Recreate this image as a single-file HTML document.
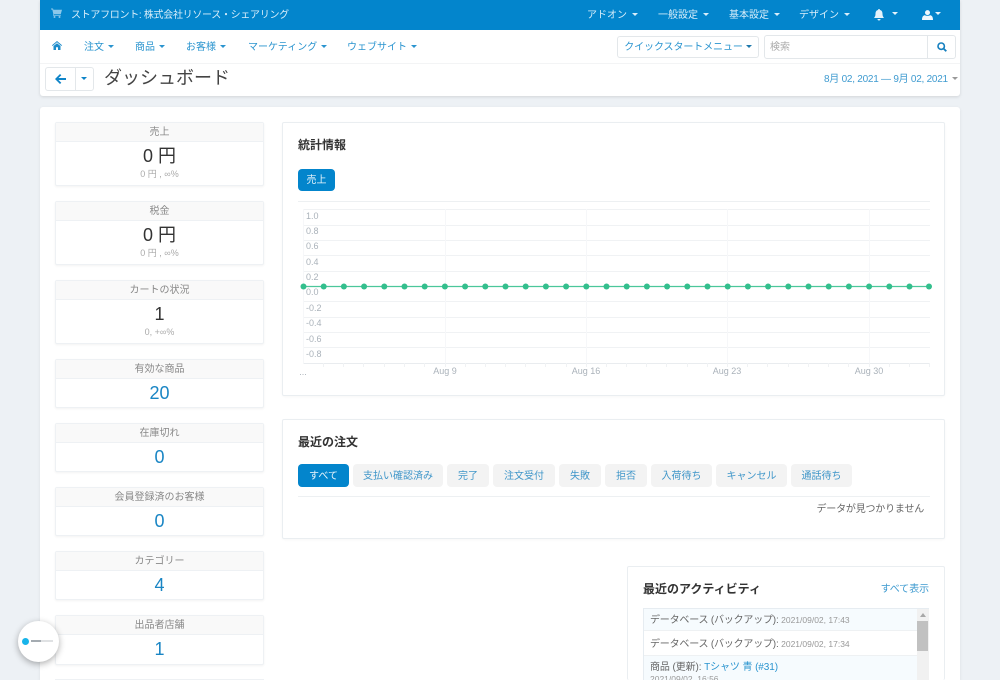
<!DOCTYPE html>
<html lang="ja"><head><meta charset="utf-8"><title>ダッシュボード</title>
<style>
*{box-sizing:border-box}
html,body{margin:0;padding:0;width:1000px;height:680px;overflow:hidden}
body{background:#edf1f5;font-family:"Liberation Sans","Noto Sans CJK JP",sans-serif;font-size:10px;color:#555}
#r{position:absolute;left:0;top:0;width:1000px;height:680px;overflow:hidden;background:#edf1f5}
.a{position:absolute;white-space:nowrap}
.c{display:inline-block;width:0;height:0;border-left:3px solid transparent;border-right:3px solid transparent;border-top:3px solid currentColor;vertical-align:2px;margin-left:4px}
.w{color:#d9eefa;font-size:10px;top:9px;line-height:14px}
.w .c{margin-left:5px}
.n{color:#2a94cf;font-size:10px;top:41px;line-height:14px}
.t{position:absolute;left:55px;width:209px;background:#fff;border:1px solid #eef1f4;border-radius:2px;box-shadow:0 1px 2px rgba(0,0,0,.05);text-align:center}
.t .h{height:19px;background:#f9f9f9;border-bottom:1px solid #eef1f4;font-size:10px;line-height:20px;color:#888}
.t .v{font-size:18px;line-height:24px;color:#333;margin-top:2px}
.t .s{font-size:9px;line-height:12px;color:#aaa}
.t .b{font-size:18px;line-height:25px;color:#1985c4;margin-top:2px}
.card{position:absolute;background:#fff;border:1px solid #eaeef1;border-radius:2px;box-shadow:0 1px 2px rgba(0,0,0,.03)}
.ti{font-size:12px;font-weight:bold;color:#333;line-height:16px}
.btn{position:absolute;top:464px;height:23px;border-radius:4px;background:#f3f3f3;color:#3f96c9;font-size:10px;line-height:26px;text-align:center;overflow:hidden}
.lb{position:absolute;left:306px;font-size:9px;color:#aab2ba;line-height:10px}
.xl{position:absolute;top:366px;font-size:9px;color:#aab2ba;line-height:10px;transform:translateX(-50%)}
</style></head><body><div id="r">

<div class="a" style="left:40px;top:0;width:920px;height:96px;background:#fff;border-radius:0 0 3px 3px;box-shadow:0 1px 3px rgba(0,0,0,.12)"></div>
<div class="a" style="left:40px;top:0;width:920px;height:30px;background:#0385cc"></div>
<div class="a" style="left:40px;top:63px;width:920px;height:1px;background:#f3f4f5"></div>

<svg class="a" style="left:51px;top:8px" width="11" height="10" viewBox="0 0 11 10"><path d="M0 .5h2l.4 1.2H11L9.8 6H3l-.2.8h7v1H2L2.300 6 1.300 1.500H0z" fill="#8cc8ea"/><circle cx="3.500" cy="9" r="1" fill="#8cc8ea"/><circle cx="8.500" cy="9" r="1" fill="#8cc8ea"/></svg>
<div class="a w" style="left:71px;letter-spacing:-.3px">ストアフロント: 株式会社リソース・シェアリング</div>
<div class="a w" style="left:587px">アドオン<i class="c"></i></div>
<div class="a w" style="left:658px">一般設定<i class="c"></i></div>
<div class="a w" style="left:729px">基本設定<i class="c"></i></div>
<div class="a w" style="left:799px">デザイン<i class="c"></i></div>
<svg class="a" style="left:873px;top:9px" width="12" height="12" viewBox="0 0 12 12"><path d="M6 0a1 1 0 0 1 1 1c2 .5 2.500 2 2.500 4 0 2 .8 3 1.500 4H1c.7-1 1.500-2 1.500-4 0-2 .5-3.500 2.500-4a1 1 0 0 1 1-1zM4.500 10h3a1.500 1.500 0 0 1-3 0z" fill="#e4f3fb"/></svg>
<div class="a" style="left:888px;top:8px;color:#e4f3fb;line-height:14px"><i class="c"></i></div>
<svg class="a" style="left:922px;top:10px" width="11" height="10" viewBox="0 0 11 10"><circle cx="5.500" cy="2.600" r="2.500" fill="#eef8fd"/><path d="M0 10c0-3.500 1.500-4.700 3-4.700 1 .8 4 .8 5 0 1.500 0 3 1.200 3 4.700z" fill="#eef8fd"/></svg>
<div class="a" style="left:932px;top:8px;color:#e4f3fb;line-height:14px"><i class="c" style="margin-left:3px"></i></div>

<svg class="a" style="left:52px;top:41px" width="10" height="9" viewBox="0 0 10 9"><path d="M5 0l5 4.300-.6.700L5 1.300.6 5 0 4.300zM1.500 5L5 2.200 8.500 5v4H6V6.300H4V9H1.500z" fill="#1d8ccb"/></svg>
<div class="a n" style="left:84px">注文<i class="c"></i></div>
<div class="a n" style="left:135px">商品<i class="c"></i></div>
<div class="a n" style="left:186px">お客様<i class="c"></i></div>
<div class="a n" style="left:248px">マーケティング<i class="c"></i></div>
<div class="a n" style="left:347px">ウェブサイト<i class="c"></i></div>

<div class="a" style="left:617px;top:36px;width:142px;height:22px;background:#fff;border:1px solid #e3e7ea;border-radius:3px;color:#2a94cf;font-size:10px;line-height:21px;text-align:center;letter-spacing:-.1px;overflow:hidden">クイックスタートメニュー<i class="c" style="color:#1d78ab;margin-left:3px"></i></div>
<div class="a" style="left:764px;top:35px;width:192px;height:24px;background:#fff;border:1px solid #e3e7ea;border-radius:3px"></div>
<div class="a" style="left:770px;top:41px;font-size:10px;line-height:13px;color:#aaa">検索</div>
<div class="a" style="left:927px;top:36px;width:1px;height:22px;background:#e3e7ea"></div>
<svg class="a" style="left:937px;top:42px" width="10" height="10" viewBox="0 0 10 10"><circle cx="4.200" cy="4.200" r="3.200" fill="none" stroke="#1680bf" stroke-width="1.600"/><path d="M6.600 6.600L9.300 9.300" stroke="#1680bf" stroke-width="1.800"/></svg>

<div class="a" style="left:45px;top:67px;width:49px;height:24px;background:#fff;border:1px solid #e3e7ea;border-radius:3px"></div>
<div class="a" style="left:75px;top:67px;width:1px;height:24px;background:#e3e7ea"></div>
<svg class="a" style="left:55px;top:74px" width="11" height="10" viewBox="0 0 11 10"><path d="M5 0l1.300 1.300L3.500 4H11v2H3.500l2.800 2.700L5 10 0 5z" fill="#0e84c8"/></svg>
<div class="a" style="left:77px;top:73px;color:#0e84c8;line-height:14px"><i class="c" style="margin-left:4px"></i></div>
<div class="a" style="left:104px;top:66px;font-size:18px;line-height:24px;color:#444">ダッシュボード</div>
<div class="a" style="left:824px;top:73px;font-size:10px;line-height:14px;color:#3f9bd0;letter-spacing:-.25px">8月 02, 2021 — 9月 02, 2021<i class="c" style="color:#999;margin-left:4px"></i></div>

<div class="a" style="left:40px;top:107px;width:920px;height:573px;background:#fff;border-radius:3px 3px 0 0;box-shadow:0 1px 3px rgba(0,0,0,.08)"></div>

<div class="t" style="top:122px;height:64px"><div class="h">売上</div><div class="v">0 円</div><div class="s">0 円 , ∞%</div></div>
<div class="t" style="top:201px;height:64px"><div class="h">税金</div><div class="v">0 円</div><div class="s">0 円 , ∞%</div></div>
<div class="t" style="top:280px;height:64px"><div class="h">カートの状況</div><div class="v">1</div><div class="s">0, +∞%</div></div>
<div class="t" style="top:359px;height:49px"><div class="h">有効な商品</div><div class="b">20</div></div>
<div class="t" style="top:423px;height:49px"><div class="h">在庫切れ</div><div class="b">0</div></div>
<div class="t" style="top:487px;height:49px"><div class="h">会員登録済のお客様</div><div class="b">0</div></div>
<div class="t" style="top:551px;height:49px"><div class="h">カテゴリー</div><div class="b">4</div></div>
<div class="t" style="top:615px;height:50px"><div class="h">出品者店舗</div><div class="b">1</div></div>
<div class="a" style="left:55px;top:679px;width:209px;height:1px;background:#eef1f4"></div>

<div class="card" style="left:282px;top:122px;width:663px;height:274px"></div>
<div class="a ti" style="left:298px;top:137px">統計情報</div>
<div class="a" style="left:298px;top:169px;width:37px;height:22px;background:#0385cc;border-radius:4px;color:#e8f5fc;font-size:10px;line-height:23px;text-align:center">売上</div>
<div class="a" style="left:298px;top:201px;width:632px;height:1px;background:#edf0f2"></div>

<svg class="a" style="left:295px;top:205px" width="640" height="165" viewBox="295 205 640 165">
<g stroke="#f0f2f4" stroke-width="1" fill="none">
<path d="M303.500 209.500H930M303.500 225.500H930M303.500 240.500H930M303.500 255.500H930M303.500 271.500H930M303.500 301.500H930M303.500 317.500H930M303.500 332.500H930M303.500 347.500H930"/>
<path d="M303.500 209V363M445.500 209V363M586.500 209V363M727.500 209V363M869.500 209V363" stroke="#f6f7f9"/>
<path d="M303.500 363.500H930" stroke="#e9ecef"/>
<path d="M323.500 363v4M343.500 363v4M363.500 363v4M384.500 363v4M404.500 363v4M424.500 363v4M445.500 363v4M465.500 363v4M485.500 363v4M505.500 363v4M525.500 363v4M545.500 363v4M566.500 363v4M586.500 363v4M606.500 363v4M626.500 363v4M646.500 363v4M666.500 363v4M687.500 363v4M707.500 363v4M727.500 363v4M747.500 363v4M767.500 363v4M788.500 363v4M808.500 363v4M828.500 363v4M848.500 363v4M869.500 363v4M889.500 363v4M909.500 363v4M929.500 363v4"/>
</g>
<path d="M303 286.500H930" stroke="#4cc79b" stroke-width="1.200"/>
<g fill="#33bf8d">
<circle cx="303.500" cy="286.500" r="3"/><circle cx="323.700" cy="286.500" r="3"/><circle cx="343.900" cy="286.500" r="3"/><circle cx="364.100" cy="286.500" r="3"/><circle cx="384.300" cy="286.500" r="3"/><circle cx="404.500" cy="286.500" r="3"/><circle cx="424.700" cy="286.500" r="3"/><circle cx="444.900" cy="286.500" r="3"/><circle cx="465.100" cy="286.500" r="3"/><circle cx="485.300" cy="286.500" r="3"/><circle cx="505.500" cy="286.500" r="3"/><circle cx="525.700" cy="286.500" r="3"/><circle cx="545.900" cy="286.500" r="3"/><circle cx="566.100" cy="286.500" r="3"/><circle cx="586.300" cy="286.500" r="3"/><circle cx="606.500" cy="286.500" r="3"/><circle cx="626.700" cy="286.500" r="3"/><circle cx="646.900" cy="286.500" r="3"/><circle cx="667.100" cy="286.500" r="3"/><circle cx="687.300" cy="286.500" r="3"/><circle cx="707.500" cy="286.500" r="3"/><circle cx="727.700" cy="286.500" r="3"/><circle cx="747.900" cy="286.500" r="3"/><circle cx="768.100" cy="286.500" r="3"/><circle cx="788.300" cy="286.500" r="3"/><circle cx="808.500" cy="286.500" r="3"/><circle cx="828.700" cy="286.500" r="3"/><circle cx="848.900" cy="286.500" r="3"/><circle cx="869.100" cy="286.500" r="3"/><circle cx="889.300" cy="286.500" r="3"/><circle cx="909.500" cy="286.500" r="3"/><circle cx="929" cy="286.500" r="3"/>
</g>
</svg>
<div class="lb" style="top:211px">1.0</div><div class="lb" style="top:226px">0.8</div><div class="lb" style="top:241px">0.6</div><div class="lb" style="top:257px">0.4</div><div class="lb" style="top:272px">0.2</div><div class="lb" style="top:287px">0.0</div><div class="lb" style="top:303px">-0.2</div><div class="lb" style="top:318px">-0.4</div><div class="lb" style="top:334px">-0.6</div><div class="lb" style="top:349px">-0.8</div>
<div class="xl" style="left:303px;top:367px">...</div><div class="xl" style="left:445px">Aug 9</div><div class="xl" style="left:586px">Aug 16</div><div class="xl" style="left:727px">Aug 23</div><div class="xl" style="left:869px">Aug 30</div>

<div class="card" style="left:282px;top:419px;width:663px;height:120px"></div>
<div class="a ti" style="left:298px;top:434px">最近の注文</div>
<div class="btn" style="left:298px;width:51px;background:#0385cc;color:#e8f5fc">すべて</div>
<div class="btn" style="left:353px;width:90px">支払い確認済み</div>
<div class="btn" style="left:447px;width:42px">完了</div>
<div class="btn" style="left:493px;width:62px">注文受付</div>
<div class="btn" style="left:559px;width:42px">失敗</div>
<div class="btn" style="left:605px;width:42px">拒否</div>
<div class="btn" style="left:651px;width:61px">入荷待ち</div>
<div class="btn" style="left:716px;width:71px">キャンセル</div>
<div class="btn" style="left:791px;width:61px">通話待ち</div>
<div class="a" style="left:298px;top:496px;width:632px;height:1px;background:#edf0f2"></div>
<div class="a" style="right:76px;top:503px;font-size:10px;line-height:14px;color:#666;letter-spacing:-.2px">データが見つかりません</div>

<div class="card" style="left:627px;top:566px;width:318px;height:114px;border-bottom:0;box-shadow:none"></div>
<div class="a ti" style="left:643px;top:581px">最近のアクティビティ</div>
<div class="a" style="right:71px;top:583px;font-size:10px;line-height:14px;color:#3f9bd0;letter-spacing:-.1px">すべて表示</div>
<div class="a" style="left:643px;top:608px;width:286px;height:72px;border:1px solid #e6ecf1;border-bottom:0;background:#fff"></div>
<div class="a" style="left:644px;top:609px;width:273px;height:22px;background:#f6fbfe;border-bottom:1px solid #eef1f3"></div>
<div class="a" style="left:644px;top:655px;width:273px;height:25px;background:#f6fbfe;border-top:1px solid #eef1f3"></div>
<div class="a" style="left:650px;top:613px;font-size:10px;line-height:15px;color:#666;letter-spacing:-.2px">データベース (バックアップ): <span style="font-size:8.500px;color:#999;letter-spacing:0">2021/09/02, 17:43</span></div>
<div class="a" style="left:650px;top:637px;font-size:10px;line-height:15px;color:#666;letter-spacing:-.2px">データベース (バックアップ): <span style="font-size:8.500px;color:#999;letter-spacing:0">2021/09/02, 17:34</span></div>
<div class="a" style="left:650px;top:660px;font-size:10px;line-height:15px;color:#666;letter-spacing:-.1px">商品 (更新): <span style="color:#2a94cf">Tシャツ 青 (#31)</span></div>
<div class="a" style="left:650px;top:673px;height:7px;overflow:hidden;font-size:8.500px;line-height:12px;color:#999">2021/09/02, 16:56</div>
<div class="a" style="left:917px;top:609px;width:12px;height:71px;background:#f1f1f1"></div>
<div class="a" style="left:917px;top:621px;width:11px;height:30px;background:#c1c1c1"></div>
<div class="a" style="left:920px;top:613px;width:0;height:0;border-left:3px solid transparent;border-right:3px solid transparent;border-bottom:4px solid #a8a8a8"></div>

<div class="a" style="left:18px;top:621px;width:41px;height:41px;border-radius:50%;background:#fff;box-shadow:0 2px 7px rgba(0,0,0,.32)"></div>
<div class="a" style="left:22px;top:638px;width:7px;height:7px;border-radius:50%;background:#18b4ea"></div>
<div class="a" style="left:31px;top:640px;width:10px;height:2px;background:#a4abb1"></div>
<div class="a" style="left:41px;top:640px;width:12px;height:2px;background:#dfe1e3"></div>
</div></body></html>
